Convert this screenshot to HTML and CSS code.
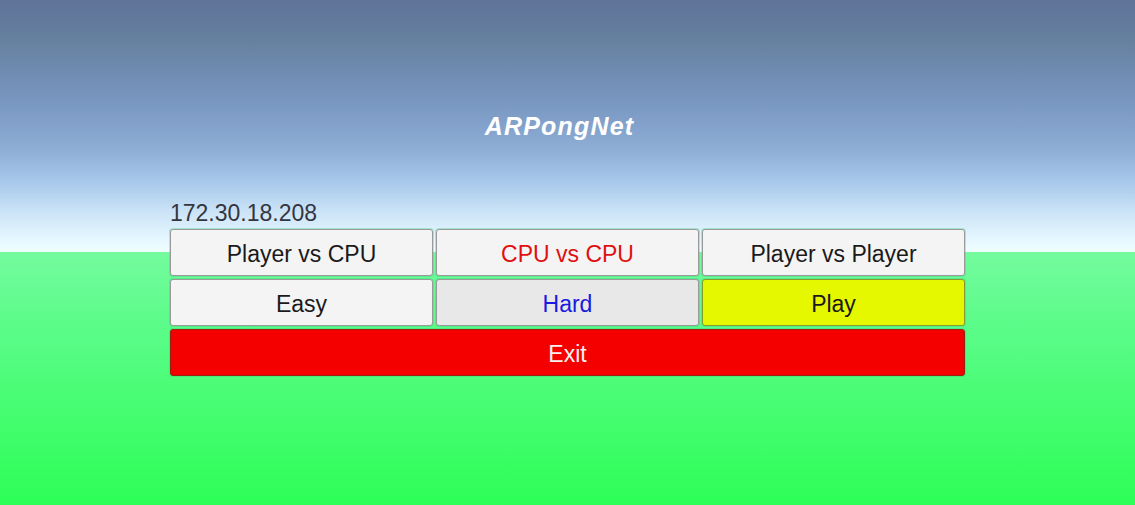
FILE: index.html
```html
<!DOCTYPE html>
<html>
<head>
<meta charset="utf-8">
<link rel="stylesheet" href="styles.css">
</head>
<body>
<main class="scene">
  <h1 class="title">ARPongNet</h1>
  <section class="panel">
    <div class="ip">172.30.18.208</div>
    <div class="grid">
      <button class="btn">Player vs CPU</button>
      <button class="btn btn-red-text">CPU vs CPU</button>
      <button class="btn">Player vs Player</button>
      <button class="btn">Easy</button>
      <button class="btn btn-selected btn-blue-text">Hard</button>
      <button class="btn btn-play">Play</button>
      <button class="btn btn-exit">Exit</button>
    </div>
  </section>
</main>
</body>
</html>
```
FILE: styles.css
```css
* { box-sizing: border-box; }
html, body { margin: 0; padding: 0; }
body {
  width: 1135px;
  height: 505px;
  overflow: hidden;
  font-family: "Liberation Sans", Arial, sans-serif;
}
.scene {
  width: 1135px;
  height: 505px;
  display: flex;
  flex-direction: column;
  align-items: center;
  background: linear-gradient(to bottom,
    #5f7399 0px,
    #66809f 40px,
    #7896c0 100px,
    #8eaed6 150px,
    #aacbec 185px,
    #cfe6f8 215px,
    #e6f8ff 240px,
    #effeff 252px,
    #74fb9e 252px,
    #5cfc8a 322px,
    #45fd70 412px,
    #2dfe57 505px);
}
.title {
  margin: 110px 0 0 0;
  font-size: 25px;
  font-weight: bold;
  font-style: italic;
  letter-spacing: 1.2px;
  color: #ffffff;
  line-height: 32px;
  padding-right: 16px;
}
.panel {
  width: 795px;
  margin-top: 58px;
}
.ip {
  font-size: 23px;
  line-height: 26px;
  color: #333640;
  margin-bottom: 3px;
}
.grid {
  display: grid;
  grid-template-columns: repeat(3, 1fr);
  gap: 3px;
}
.btn {
  height: 47px;
  border: 1px solid #9a9a9a;
  border-radius: 3px;
  background: #f4f4f4;
  font-family: "Liberation Sans", Arial, sans-serif;
  font-size: 23px;
  color: #1a1a1a;
  padding: 3px 0 0 0;
  box-shadow: 0 0 0 1px rgba(60,200,120,0.35);
}
.btn-red-text { color: #e01010; }
.btn-blue-text { color: #1a1ae0; }
.btn-selected { background: #e8e8e8; }
.btn-play { background: #e6f800; border-color: #8a9a30; }
.btn-exit {
  grid-column: 1 / 4;
  background: #f40000;
  border-color: #9a2010;
  color: #f6f0f0;
}
```
